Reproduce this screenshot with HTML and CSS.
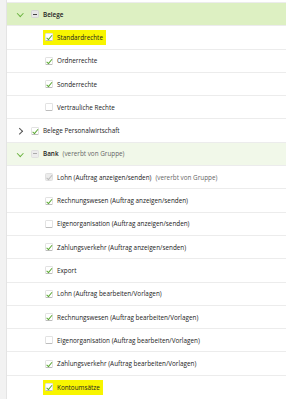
FILE: index.html
```html
<!DOCTYPE html>
<html lang="de">
<head>
  <meta charset="UTF-8">
  <title>Rechte</title>
  <link rel="stylesheet" href="styles.css">
</head>
<body>
  <div class="page">
    <div class="side"></div>
    <ul class="tree">
      <li class="row group open active">
        <span class="chev down"></span>
        <span class="box part"></span>
        <span class="label strong">Belege</span>
      </li>
      <li class="row child">
        <span class="mark"><span class="box on"></span><span class="label">Standardrechte</span></span>
      </li>
      <li class="row child"><span class="box on"></span><span class="label">Ordnerrechte</span></li>
      <li class="row child"><span class="box on"></span><span class="label">Sonderrechte</span></li>
      <li class="row child"><span class="box"></span><span class="label">Vertrauliche Rechte</span></li>
      <li class="row group">
        <span class="chev right"></span>
        <span class="box on"></span>
        <span class="label">Belege Personalwirtschaft</span>
      </li>
      <li class="row group open soft">
        <span class="chev down"></span>
        <span class="box part dim"></span>
        <span class="label strong">Bank</span>
        <span class="note">(vererbt von Gruppe)</span>
      </li>
      <li class="row child"><span class="box on dim"></span><span class="label">Lohn (Auftrag anzeigen/senden)</span><span class="note">(vererbt von Gruppe)</span></li>
      <li class="row child"><span class="box on"></span><span class="label">Rechnungswesen (Auftrag anzeigen/senden)</span></li>
      <li class="row child"><span class="box"></span><span class="label">Eigenorganisation (Auftrag anzeigen/senden)</span></li>
      <li class="row child"><span class="box on"></span><span class="label">Zahlungsverkehr (Auftrag anzeigen/senden)</span></li>
      <li class="row child"><span class="box on"></span><span class="label">Export</span></li>
      <li class="row child"><span class="box on"></span><span class="label">Lohn (Auftrag bearbeiten/Vorlagen)</span></li>
      <li class="row child"><span class="box on"></span><span class="label">Rechnungswesen (Auftrag bearbeiten/Vorlagen)</span></li>
      <li class="row child"><span class="box"></span><span class="label">Eigenorganisation (Auftrag bearbeiten/Vorlagen)</span></li>
      <li class="row child"><span class="box on"></span><span class="label">Zahlungsverkehr (Auftrag bearbeiten/Vorlagen)</span></li>
      <li class="row child last">
        <span class="mark"><span class="box on"></span><span class="label">Kontoumsätze</span></span>
      </li>
    </ul>
  </div>
</body>
</html>
```

FILE: styles.css
```css
:root {
  --line: #ececec;
  --check: #5aa832;
  --text: #222;
}

* {
  box-sizing: border-box;
  margin: 0;
  padding: 0;
}

body {
  font-family: "Open Sans", "Noto Sans", sans-serif;
  font-size: 6.35px;
  color: var(--text);
  background: white;
}

.page {
  display: flex;
  min-height: 399px;
}

.side {
  width: 7px;
  flex: none;
  background: #f2f2f2;
  border-right: 1px solid #e4e4e4;
}

.tree {
  list-style: none;
  flex: 1;
  margin-top: 2px;
  border-top: 1px solid var(--line);
}

.row {
  height: 23.3px;
  display: flex;
  align-items: center;
  border-bottom: 1px solid var(--line);
  white-space: nowrap;
}

.row.last {
  border-bottom: none;
}

.group {
  padding-left: 10px;
}

.child {
  padding-left: 38px;
}

.active {
  background: #ddf0c2;
}

.soft {
  background: #f1f8e9;
}

.chev {
  width: 6px;
  height: 6px;
  margin-right: 8px;
  position: relative;
}

.chev::before {
  content: "";
  position: absolute;
  width: 3.5px;
  height: 3.5px;
  border-right: 1px solid #555;
  border-bottom: 1px solid #555;
}

.chev.down::before {
  left: 1px;
  top: 0;
  transform: rotate(45deg);
  border-color: #6bb33f;
}

.chev.right::before {
  left: 0;
  top: 1px;
  transform: rotate(-45deg);
}

.box {
  width: 8px;
  height: 8px;
  flex: none;
  margin-right: 4px;
  border-radius: 1.5px;
  background: white;
  border: 1px solid #e2e2e2;
  border-bottom-color: #bdbdbd;
  position: relative;
}

.box.on::after {
  content: "";
  position: absolute;
  left: 2px;
  top: 0;
  width: 2px;
  height: 4.5px;
  border-right: 1px solid var(--check);
  border-bottom: 1px solid var(--check);
  transform: rotate(40deg);
}

.box.part {
  background: #e6e6e6;
  border-color: #d4d4d4;
}

.box.part::after {
  content: "";
  position: absolute;
  left: 1px;
  right: 1px;
  top: 2.5px;
  height: 1px;
  background: #444;
}

.box.dim {
  background: #ececec;
  border-color: #e0e0e0;
}

.box.part.dim::after {
  background: #aaa;
}

.box.on.dim::after {
  border-color: #bbb;
}

.label.strong {
  font-weight: 600;
}

.note {
  color: #666;
  margin-left: 4px;
}

.mark {
  display: flex;
  align-items: center;
  background: #f8f500;
  margin-left: -2px;
  padding: 3px 3px 3px 2px;
}
```
